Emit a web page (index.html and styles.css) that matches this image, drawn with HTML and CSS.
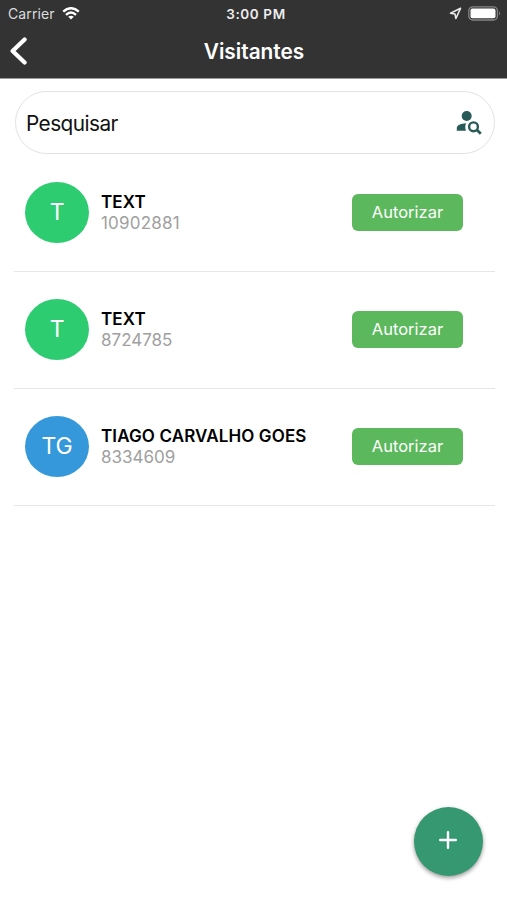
FILE: index.html
```html
<!DOCTYPE html>
<html lang="pt-BR">
<head>
<meta charset="utf-8">
<title>Visitantes</title>
<link rel="stylesheet" href="styles.css">
</head>
<body>
<header class="header">
  <div class="status">
    <div class="status-left">
      <span class="carrier">Carrier</span>
      <svg class="wifi" width="18" height="13" viewBox="0 0 18 13" fill="none" stroke="#fff" stroke-width="2.4"><path d="M1.2 4.6Q9-2.2 16.8 4.6"/><path d="M4 7.8Q9 3.4 14 7.8"/><path d="M9 12.6 6.2 9.8Q9 7.6 11.8 9.8Z" fill="#fff" stroke="none"/></svg>
    </div>
    <span class="clock">3:00 PM</span>
    <div class="status-right">
      <svg width="13" height="13" viewBox="0 0 13 13" fill="none" stroke="#e8e8e8" stroke-width="1.6" stroke-linejoin="round"><path d="M11.5 1.3 1.5 6.2 6 7 6.9 11.5Z"/></svg>
      <svg width="33" height="15" viewBox="0 0 33 15"><rect x=".8" y=".8" width="28.6" height="13.2" rx="4" fill="none" stroke="#858585" stroke-width="1.3"/><rect x="2.5" y="2.6" width="25" height="9.7" rx="2" fill="#fff"/><path d="M31 5.2Q33 7.4 31 9.6Z" fill="#858585"/></svg>
    </div>
  </div>
  <div class="navbar">
    <svg class="back" width="18" height="30" viewBox="0 0 18 30" fill="none" stroke="#fff" stroke-width="4.2" stroke-linecap="round" stroke-linejoin="round"><path d="M15.6 3.4 3.6 15 15.6 26.6"/></svg>
    <h1 class="title">Visitantes</h1>
  </div>
</header>
<main class="content">
  <div class="search">
    <span class="placeholder">Pesquisar</span>
    <svg class="search-icon" width="26" height="25" viewBox="0 0 26 25" fill="none"><circle cx="10.7" cy="6" r="5" fill="#285a58"/><path d="M.8 20.8V18C.8 15.2 5 13.4 10.2 13.2 9 15.5 9 18.3 10 20.8Z" fill="#285a58"/><circle cx="17.5" cy="16.8" r="4.4" stroke="#285a58" stroke-width="2.4"/><path d="M20.7 19.8 24.8 23.8" stroke="#285a58" stroke-width="2.7"/></svg>
  </div>
  <ul class="list">
    <li class="row">
      <div class="avatar green">T</div>
      <div class="info"><span class="name short">TEXT</span><span class="number long">10902881</span></div>
      <button class="authorize">Autorizar</button>
    </li>
    <li class="row">
      <div class="avatar green">T</div>
      <div class="info"><span class="name short">TEXT</span><span class="number">8724785</span></div>
      <button class="authorize">Autorizar</button>
    </li>
    <li class="row">
      <div class="avatar blue">TG</div>
      <div class="info"><span class="name">TIAGO CARVALHO GOES</span><span class="number">8334609</span></div>
      <button class="authorize">Autorizar</button>
    </li>
  </ul>
</main>
<button class="fab" aria-label="Adicionar"><svg width="18" height="18" viewBox="0 0 18 18" stroke="#fff" stroke-width="2.4" stroke-linecap="round"><path d="M9 1.2V16.8M1.2 9H16.8"/></svg></button>
</body>
</html>
```
FILE: styles.css
```css
* { box-sizing: border-box; }
body {
  margin: 0;
  height: 900px;
  background: #fff;
  color: #000;
  font-family: Inter, "Liberation Sans", sans-serif;
  overflow: hidden;
}
button { border: 0; padding: 0; font-family: inherit; }
.header {
  height: 79px;
  background: #333;
  border-bottom: 1px solid #999;
}
.status {
  display: grid;
  grid-template-columns: 1fr auto 1fr;
  align-items: center;
  height: 27px;
  padding: 0 6px 0 8px;
}
.status-left { display: flex; align-items: center; gap: 7px; }
.status-right { display: flex; align-items: center; justify-content: flex-end; gap: 6px; }
.carrier { color: #ddd; font-size: 14px; letter-spacing: .1px; }
.clock { color: #eee; font-size: 13.5px; font-weight: 600; letter-spacing: .6px; padding-left: 3px; }
.navbar {
  display: grid;
  grid-template-columns: 1fr auto 1fr;
  align-items: center;
  height: 48px;
  padding: 0 8px 0 9px;
}
.title { margin: 0; color: #fff; font-size: 20.8px; font-weight: 600; line-height: 24px; padding-top: 1px; }
.content { padding: 12px 12px 0 14px; }
.search {
  display: flex;
  align-items: center;
  justify-content: space-between;
  height: 63px;
  margin-left: 1px;
  padding: 0 12px 0 10px;
  border: 1px solid #e2e2e2;
  border-radius: 32px;
}
.placeholder { color: #111; font-size: 20.8px; letter-spacing: -.55px; padding-top: 1px; }
.list { margin: 1px 0 0; padding: 0; list-style: none; }
.row {
  display: flex;
  align-items: center;
  height: 117px;
  padding: 0 32px 2px 11px;
  border-bottom: 1px solid #e6e6e6;
}
.avatar {
  display: flex;
  align-items: center;
  justify-content: center;
  width: 64px;
  height: 61px;
  border-radius: 50%;
  color: #fff;
  font-size: 23px;
  letter-spacing: -.2px;
  padding-bottom: 1px;
}
.green { background: #2ecc71; }
.blue { background: #3498db; }
.info { display: flex; flex-direction: column; flex: 1; padding: 2px 0 0 12px; }
.name { font-size: 17px; font-weight: 600; line-height: 21px; letter-spacing: .12px; }
.number { color: #a0a0a0; font-size: 17px; line-height: 21px; }
.number.long { letter-spacing: .2px; }
.authorize {
  width: 111px;
  height: 37px;
  border-radius: 6px;
  background: #5cb85c;
  color: #fff;
  font-size: 16.5px;
}
.fab {
  position: absolute;
  left: 414px;
  top: 807px;
  display: flex;
  align-items: center;
  justify-content: center;
  width: 69px;
  height: 69px;
  padding: 0 2px 3px 0;
  border-radius: 50%;
  background: #359871;
  box-shadow: 0 2px 4px rgba(0, 0, 0, .4);
}
```
